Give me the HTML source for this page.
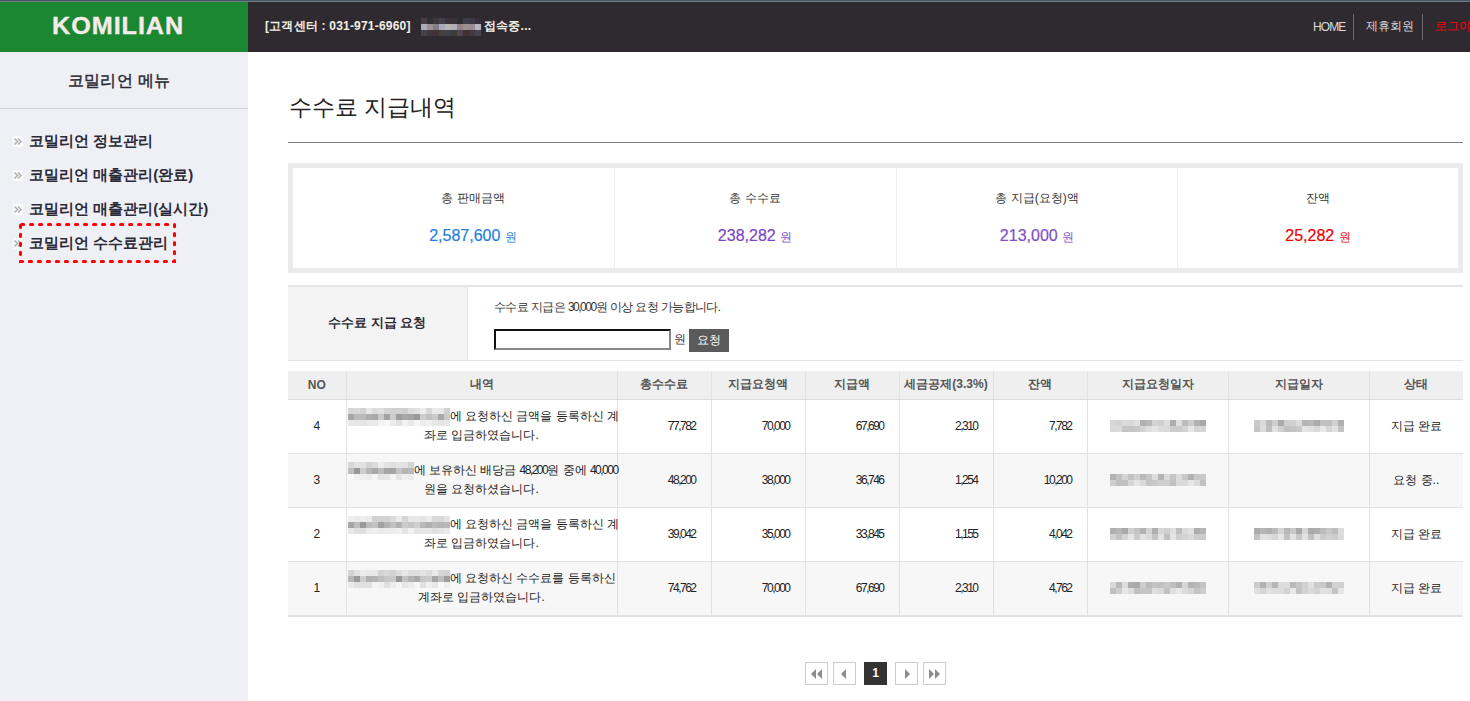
<!DOCTYPE html>
<html><head><meta charset="utf-8">
<style>
*{margin:0;padding:0;box-sizing:border-box}
html,body{width:1470px;height:701px;overflow:hidden;background:#fff;font-family:"Liberation Sans",sans-serif;color:#222}
.a{position:absolute}
#topline{left:0;top:0;width:1470px;height:2px;background:linear-gradient(#455760 0 1px,#707d85 1px 2px)}
#logo{left:0;top:2px;width:248px;height:50px;background:#1b8731}
#logo span{position:absolute;left:52px;top:11px;font-size:24px;font-weight:bold;letter-spacing:0.9px;color:#f6ebea;line-height:26px;transform:scaleX(1.05);transform-origin:0 0;-webkit-text-stroke:0.35px #f6ebea}
#hdr{left:248px;top:2px;width:1222px;height:50px;background:#2f2a30}
.ht{font-size:12px;font-weight:bold;color:#f0efe6;white-space:nowrap;line-height:14px;letter-spacing:0.2px}
.nav{font-size:12px;color:#dcdcdc;white-space:nowrap;line-height:14px}
.sep{width:1px;height:26px;top:14px;background:#6b666b}
#side{left:0;top:52px;width:248px;height:649px;background:#eff0f5}
#sidetitle{left:0;top:72px;width:238px;text-align:center;font-size:16px;font-weight:normal;-webkit-text-stroke:0.45px;letter-spacing:0.3px;color:#2a2a33;line-height:18px;white-space:nowrap}
#sideline{left:0;top:108px;width:248px;height:1px;background:#d2d3d8}
.mi{left:29px;font-size:15px;font-weight:bold;color:#2b2b38;white-space:nowrap;line-height:17px}
.bul{left:13px;width:10px;height:11px;background:#fafafa}
#title{left:289px;top:94px;font-size:23px;color:#222;white-space:nowrap;line-height:26px}
#titleline{left:288px;top:142px;width:1175px;height:1px;background:#7d7d7d}
#sum{left:288px;top:163px;width:1175px;height:110px;border:5px solid #ebebeb;background:#fff}
.vd{width:1px;background:#eeeeee}
.sl{font-size:12px;color:#333;white-space:nowrap;line-height:14px;text-align:center}
.sv{font-size:16px;white-space:nowrap;line-height:18px;text-align:center;-webkit-text-stroke:0.2px}
.sv small{font-size:12px;-webkit-text-stroke:0}
#req{left:288px;top:285px;width:1175px;height:76px;border-top:2px solid #e6e6e6;border-bottom:1px solid #e3e3e3}
#reqth{left:288px;top:287px;width:180px;height:73px;background:#f3f3f3;border-right:1px solid #e4e4e4}
table{border-collapse:collapse;table-layout:fixed}
#tbl{left:288px;top:371px;width:1175px}
#tbl th{height:28px;background:#efefef;font-size:12px;font-weight:bold;color:#555;border-left:1px solid #e2e2e2;border-bottom:1px solid #dcdcdc;white-space:nowrap}
#tbl td{height:54px;font-size:12px;color:#222;border-left:1px solid #e2e2e2;border-bottom:1px solid #e0e0e0;text-align:center;white-space:nowrap}
#tbl th:first-child,#tbl td:first-child{border-left:none}
#tbl tr.g td{background:#f7f7f7}
#tbl td.n{text-align:right;padding-right:15px;letter-spacing:-1.5px}
.nn{letter-spacing:-1.5px}
#tbl tr:last-child td{border-bottom:2px solid #e0e0e0;height:55px}
#tbl td.d{text-align:center;padding:0 1px 0 1px;vertical-align:top}
#tbl td.d .l1{display:flex;align-items:center;height:18px;margin-top:8px;white-space:nowrap}
#tbl td.d .l1 svg{flex:none}
#tbl td.d .l2{height:19px;line-height:19px;text-align:center}
.tri{width:0;height:0;border-top:5px solid transparent;border-bottom:5px solid transparent}
.tl{border-right:5px solid #8c8c8c}
.tr{border-left:5px solid #8c8c8c}
.pg{width:23px;height:23px;border:1px solid #cccccc;background:#fff;top:662px}
</style></head><body>
<div id="topline" class="a"></div>
<div id="logo" class="a"><span>KOMILIAN</span></div>
<div id="hdr" class="a"></div>
<div class="a ht" style="left:265px;top:19px">[고객센터 : 031-971-6960]</div>
<div class="a" style="left:421px;top:18px"><svg width="60" height="18" style="display:block" shape-rendering="crispEdges"><rect x="0" y="0" width="6" height="6" fill="#463b3f"/><rect x="6" y="0" width="6" height="6" fill="#2f2f34"/><rect x="12" y="0" width="6" height="6" fill="#3a383d"/><rect x="18" y="0" width="6" height="6" fill="#3f3e49"/><rect x="24" y="0" width="6" height="6" fill="#3e303b"/><rect x="30" y="0" width="6" height="6" fill="#383336"/><rect x="36" y="0" width="6" height="6" fill="#2f2b33"/><rect x="42" y="0" width="6" height="6" fill="#3d3b47"/><rect x="48" y="0" width="6" height="6" fill="#3b3846"/><rect x="54" y="0" width="6" height="6" fill="#352e39"/><rect x="0" y="6" width="6" height="6" fill="#adabb7"/><rect x="6" y="6" width="6" height="6" fill="#9c9094"/><rect x="12" y="6" width="6" height="6" fill="#837d88"/><rect x="18" y="6" width="6" height="6" fill="#aaa9b7"/><rect x="24" y="6" width="6" height="6" fill="#b9b5b5"/><rect x="30" y="6" width="6" height="6" fill="#b1aeb7"/><rect x="36" y="6" width="6" height="6" fill="#938184"/><rect x="42" y="6" width="6" height="6" fill="#9b9191"/><rect x="48" y="6" width="6" height="6" fill="#9a8997"/><rect x="54" y="6" width="6" height="6" fill="#b7b5be"/><rect x="0" y="12" width="6" height="6" fill="#474147"/><rect x="6" y="12" width="6" height="6" fill="#3c3640"/><rect x="12" y="12" width="6" height="6" fill="#433133"/><rect x="18" y="12" width="6" height="6" fill="#424141"/><rect x="24" y="12" width="6" height="6" fill="#433f4a"/><rect x="30" y="12" width="6" height="6" fill="#3d3c3d"/><rect x="36" y="12" width="6" height="6" fill="#514553"/><rect x="42" y="12" width="6" height="6" fill="#403030"/><rect x="48" y="12" width="6" height="6" fill="#473740"/><rect x="54" y="12" width="6" height="6" fill="#464451"/></svg></div>
<div class="a ht" style="left:484px;top:19px">접속중...</div>
<div class="a nav" style="left:1313px;top:20px;letter-spacing:-0.9px">HOME</div>
<div class="a sep" style="left:1353px"></div>
<div class="a nav" style="left:1366px;top:19px">제휴회원</div>
<div class="a sep" style="left:1422px"></div>
<div class="a nav" style="left:1435px;top:19px;color:#ff0000">로그아웃</div>

<div id="side" class="a"></div>
<div id="sidetitle" class="a">코밀리언 메뉴</div>
<div id="sideline" class="a"></div>
<div class="a bul" style="top:136px"><svg width="10" height="11" style="display:block"><path d="M1.5 2.5 L4.5 5.5 L1.5 8.5 M5 2.5 L8 5.5 L5 8.5" fill="none" stroke="#b4b4b4" stroke-width="1.7"/></svg></div>
<div class="a mi" style="top:132px">코밀리언 정보관리</div>
<div class="a bul" style="top:170px"><svg width="10" height="11" style="display:block"><path d="M1.5 2.5 L4.5 5.5 L1.5 8.5 M5 2.5 L8 5.5 L5 8.5" fill="none" stroke="#b4b4b4" stroke-width="1.7"/></svg></div>
<div class="a mi" style="top:166px">코밀리언 매출관리(완료)</div>
<div class="a bul" style="top:204px"><svg width="10" height="11" style="display:block"><path d="M1.5 2.5 L4.5 5.5 L1.5 8.5 M5 2.5 L8 5.5 L5 8.5" fill="none" stroke="#b4b4b4" stroke-width="1.7"/></svg></div>
<div class="a mi" style="top:200px">코밀리언 매출관리(실시간)</div>
<div class="a bul" style="top:238px"><svg width="10" height="11" style="display:block"><path d="M1.5 2.5 L4.5 5.5 L1.5 8.5 M5 2.5 L8 5.5 L5 8.5" fill="none" stroke="#b4b4b4" stroke-width="1.7"/></svg></div>
<div class="a mi" style="top:234px">코밀리언 수수료관리</div>
<svg class="a" style="left:19px;top:223px" width="157" height="40"><rect x="1.5" y="1.5" width="154" height="37" fill="none" stroke="#ff0000" stroke-width="3" stroke-dasharray="2.2 6.8" stroke-linecap="round" stroke-dashoffset="-1"/></svg>

<div id="title" class="a">수수료 지급내역</div>
<div id="titleline" class="a"></div>

<div id="sum" class="a"></div>
<div class="a vd" style="left:614px;top:168px;height:100px"></div>
<div class="a vd" style="left:896px;top:168px;height:100px"></div>
<div class="a vd" style="left:1177px;top:168px;height:100px"></div>
<div class="a sl" style="left:373px;top:191px;width:200px">총 판매금액</div>
<div class="a sv" style="left:373px;top:227px;width:200px;color:#1f7fdc">2,587,600 <small>원</small></div>
<div class="a sl" style="left:655px;top:191px;width:200px">총 수수료</div>
<div class="a sv" style="left:655px;top:227px;width:200px;color:#7d45c8">238,282 <small>원</small></div>
<div class="a sl" style="left:937px;top:191px;width:200px">총 지급(요청)액</div>
<div class="a sv" style="left:937px;top:227px;width:200px;color:#7d4fc8">213,000 <small>원</small></div>
<div class="a sl" style="left:1218px;top:191px;width:200px">잔액</div>
<div class="a sv" style="left:1218px;top:227px;width:200px;color:#ee0000">25,282 <small>원</small></div>

<div id="req" class="a"></div>
<div id="reqth" class="a"></div>
<div class="a" style="left:328px;top:315px;font-size:13px;font-weight:bold;color:#2a2a33;white-space:nowrap;line-height:15px">수수료 지급 요청</div>
<div class="a" style="left:494px;top:300px;font-size:12px;color:#333;white-space:nowrap;line-height:14px;letter-spacing:-0.6px">수수료 지급은 <span class="nn">30,000</span>원 이상 요청 가능합니다.</div>
<div class="a" style="left:494px;top:329px;width:177px;height:21px;border:2px solid;border-color:#111 #888 #888 #111;background:#fff"></div>
<div class="a" style="left:674px;top:332px;font-size:12px;color:#333;line-height:14px">원</div>
<div class="a" style="left:689px;top:329px;width:40px;height:23px;background:#5a5a5a;color:#fff;font-size:12px;line-height:23px;text-align:center">요청</div>

<table id="tbl" class="a">
<colgroup><col style="width:58px"><col style="width:271px"><col style="width:94px"><col style="width:94px"><col style="width:94px"><col style="width:94px"><col style="width:94px"><col style="width:141px"><col style="width:141px"><col style="width:94px"></colgroup>
<tr><th>NO</th><th>내역</th><th>총수수료</th><th>지급요청액</th><th>지급액</th><th>세금공제(3.3%)</th><th>잔액</th><th>지급요청일자</th><th>지급일자</th><th>상태</th></tr>
<tr><td>4</td><td class="d"><div class="l1"><svg width="102" height="18" style="display:block" shape-rendering="crispEdges"><rect x="0" y="0" width="6" height="6" fill="#d7d7d7"/><rect x="6" y="0" width="6" height="6" fill="#d9d9d9"/><rect x="12" y="0" width="6" height="6" fill="#d3d3d3"/><rect x="18" y="0" width="6" height="6" fill="#e7e7e7"/><rect x="24" y="0" width="6" height="6" fill="#dcdcdc"/><rect x="30" y="0" width="6" height="6" fill="#dfdfdf"/><rect x="36" y="0" width="6" height="6" fill="#d4d4d4"/><rect x="42" y="0" width="6" height="6" fill="#d2d2d2"/><rect x="48" y="0" width="6" height="6" fill="#d2d2d2"/><rect x="54" y="0" width="6" height="6" fill="#d0d0d0"/><rect x="60" y="0" width="6" height="6" fill="#dcdcdc"/><rect x="66" y="0" width="6" height="6" fill="#e1e1e1"/><rect x="72" y="0" width="6" height="6" fill="#ededed"/><rect x="78" y="0" width="6" height="6" fill="#d9d9d9"/><rect x="84" y="0" width="6" height="6" fill="#e9e9e9"/><rect x="90" y="0" width="6" height="6" fill="#e8e8e8"/><rect x="96" y="0" width="6" height="6" fill="#d1d1d1"/><rect x="0" y="6" width="6" height="6" fill="#a6a6a6"/><rect x="6" y="6" width="6" height="6" fill="#b9b9b9"/><rect x="12" y="6" width="6" height="6" fill="#bababa"/><rect x="18" y="6" width="6" height="6" fill="#afafaf"/><rect x="24" y="6" width="6" height="6" fill="#a9a9a9"/><rect x="30" y="6" width="6" height="6" fill="#c9c9c9"/><rect x="36" y="6" width="6" height="6" fill="#a3a3a3"/><rect x="42" y="6" width="6" height="6" fill="#cccccc"/><rect x="48" y="6" width="6" height="6" fill="#9e9e9e"/><rect x="54" y="6" width="6" height="6" fill="#a8a8a8"/><rect x="60" y="6" width="6" height="6" fill="#a5a5a5"/><rect x="66" y="6" width="6" height="6" fill="#999999"/><rect x="72" y="6" width="6" height="6" fill="#cdcdcd"/><rect x="78" y="6" width="6" height="6" fill="#c1c1c1"/><rect x="84" y="6" width="6" height="6" fill="#cbcbcb"/><rect x="90" y="6" width="6" height="6" fill="#a8a8a8"/><rect x="96" y="6" width="6" height="6" fill="#cbcbcb"/><rect x="0" y="12" width="6" height="6" fill="#e8e8e8"/><rect x="6" y="12" width="6" height="6" fill="#e6e6e6"/><rect x="12" y="12" width="6" height="6" fill="#e5e5e5"/><rect x="18" y="12" width="6" height="6" fill="#e9e9e9"/><rect x="24" y="12" width="6" height="6" fill="#e9e9e9"/><rect x="30" y="12" width="6" height="6" fill="#f4f4f4"/><rect x="36" y="12" width="6" height="6" fill="#f7f7f7"/><rect x="42" y="12" width="6" height="6" fill="#ebebeb"/><rect x="48" y="12" width="6" height="6" fill="#e2e2e2"/><rect x="54" y="12" width="6" height="6" fill="#f3f3f3"/><rect x="60" y="12" width="6" height="6" fill="#eaeaea"/><rect x="66" y="12" width="6" height="6" fill="#f5f5f5"/><rect x="72" y="12" width="6" height="6" fill="#ececec"/><rect x="78" y="12" width="6" height="6" fill="#f0f0f0"/><rect x="84" y="12" width="6" height="6" fill="#e7e7e7"/><rect x="90" y="12" width="6" height="6" fill="#e5e5e5"/><rect x="96" y="12" width="6" height="6" fill="#e7e7e7"/></svg><span>에 요청하신 금액을 등록하신 계</span></div><div class="l2">좌로 입금하였습니다.</div></td><td class="n">77,782</td><td class="n">70,000</td><td class="n">67,690</td><td class="n">2,310</td><td class="n">7,782</td><td></td><td></td><td>지급 완료</td></tr>
<tr class="g"><td>3</td><td class="d"><div class="l1"><svg width="66" height="18" style="display:block" shape-rendering="crispEdges"><rect x="0" y="0" width="6" height="6" fill="#d7d7d7"/><rect x="6" y="0" width="6" height="6" fill="#e2e2e2"/><rect x="12" y="0" width="6" height="6" fill="#e1e1e1"/><rect x="18" y="0" width="6" height="6" fill="#d4d4d4"/><rect x="24" y="0" width="6" height="6" fill="#dbdbdb"/><rect x="30" y="0" width="6" height="6" fill="#ededed"/><rect x="36" y="0" width="6" height="6" fill="#e3e3e3"/><rect x="42" y="0" width="6" height="6" fill="#dfdfdf"/><rect x="48" y="0" width="6" height="6" fill="#e4e4e4"/><rect x="54" y="0" width="6" height="6" fill="#e2e2e2"/><rect x="60" y="0" width="6" height="6" fill="#d2d2d2"/><rect x="0" y="6" width="6" height="6" fill="#bebebe"/><rect x="6" y="6" width="6" height="6" fill="#989898"/><rect x="12" y="6" width="6" height="6" fill="#cdcdcd"/><rect x="18" y="6" width="6" height="6" fill="#b6b6b6"/><rect x="24" y="6" width="6" height="6" fill="#a8a8a8"/><rect x="30" y="6" width="6" height="6" fill="#bbbbbb"/><rect x="36" y="6" width="6" height="6" fill="#a6a6a6"/><rect x="42" y="6" width="6" height="6" fill="#a4a4a4"/><rect x="48" y="6" width="6" height="6" fill="#c5c5c5"/><rect x="54" y="6" width="6" height="6" fill="#b6b6b6"/><rect x="60" y="6" width="6" height="6" fill="#bababa"/><rect x="0" y="12" width="6" height="6" fill="#fafafa"/><rect x="6" y="12" width="6" height="6" fill="#f1f1f1"/><rect x="12" y="12" width="6" height="6" fill="#efefef"/><rect x="18" y="12" width="6" height="6" fill="#ececec"/><rect x="24" y="12" width="6" height="6" fill="#f4f4f4"/><rect x="30" y="12" width="6" height="6" fill="#e4e4e4"/><rect x="36" y="12" width="6" height="6" fill="#e7e7e7"/><rect x="42" y="12" width="6" height="6" fill="#f4f4f4"/><rect x="48" y="12" width="6" height="6" fill="#e4e4e4"/><rect x="54" y="12" width="6" height="6" fill="#f0f0f0"/><rect x="60" y="12" width="6" height="6" fill="#ececec"/></svg><span>에 보유하신 배당금 <span class="nn">48,200</span>원 중에 <span class="nn">40,000</span></span></div><div class="l2">원을 요청하셨습니다.</div></td><td class="n">48,200</td><td class="n">38,000</td><td class="n">36,746</td><td class="n">1,254</td><td class="n">10,200</td><td></td><td></td><td>요청 중..</td></tr>
<tr><td>2</td><td class="d"><div class="l1"><svg width="102" height="18" style="display:block" shape-rendering="crispEdges"><rect x="0" y="0" width="6" height="6" fill="#eeeeee"/><rect x="6" y="0" width="6" height="6" fill="#ebebeb"/><rect x="12" y="0" width="6" height="6" fill="#eeeeee"/><rect x="18" y="0" width="6" height="6" fill="#ebebeb"/><rect x="24" y="0" width="6" height="6" fill="#d1d1d1"/><rect x="30" y="0" width="6" height="6" fill="#d2d2d2"/><rect x="36" y="0" width="6" height="6" fill="#d2d2d2"/><rect x="42" y="0" width="6" height="6" fill="#dbdbdb"/><rect x="48" y="0" width="6" height="6" fill="#eaeaea"/><rect x="54" y="0" width="6" height="6" fill="#d5d5d5"/><rect x="60" y="0" width="6" height="6" fill="#e7e7e7"/><rect x="66" y="0" width="6" height="6" fill="#e9e9e9"/><rect x="72" y="0" width="6" height="6" fill="#e5e5e5"/><rect x="78" y="0" width="6" height="6" fill="#ebebeb"/><rect x="84" y="0" width="6" height="6" fill="#d9d9d9"/><rect x="90" y="0" width="6" height="6" fill="#d8d8d8"/><rect x="96" y="0" width="6" height="6" fill="#e3e3e3"/><rect x="0" y="6" width="6" height="6" fill="#a5a5a5"/><rect x="6" y="6" width="6" height="6" fill="#bebebe"/><rect x="12" y="6" width="6" height="6" fill="#9a9a9a"/><rect x="18" y="6" width="6" height="6" fill="#bdbdbd"/><rect x="24" y="6" width="6" height="6" fill="#c3c3c3"/><rect x="30" y="6" width="6" height="6" fill="#a2a2a2"/><rect x="36" y="6" width="6" height="6" fill="#b3b3b3"/><rect x="42" y="6" width="6" height="6" fill="#c0c0c0"/><rect x="48" y="6" width="6" height="6" fill="#b1b1b1"/><rect x="54" y="6" width="6" height="6" fill="#cbcbcb"/><rect x="60" y="6" width="6" height="6" fill="#c6c6c6"/><rect x="66" y="6" width="6" height="6" fill="#cfcfcf"/><rect x="72" y="6" width="6" height="6" fill="#b8b8b8"/><rect x="78" y="6" width="6" height="6" fill="#afafaf"/><rect x="84" y="6" width="6" height="6" fill="#bababa"/><rect x="90" y="6" width="6" height="6" fill="#b4b4b4"/><rect x="96" y="6" width="6" height="6" fill="#b8b8b8"/><rect x="0" y="12" width="6" height="6" fill="#e8e8e8"/><rect x="6" y="12" width="6" height="6" fill="#e1e1e1"/><rect x="12" y="12" width="6" height="6" fill="#e0e0e0"/><rect x="18" y="12" width="6" height="6" fill="#ebebeb"/><rect x="24" y="12" width="6" height="6" fill="#eeeeee"/><rect x="30" y="12" width="6" height="6" fill="#eaeaea"/><rect x="36" y="12" width="6" height="6" fill="#ececec"/><rect x="42" y="12" width="6" height="6" fill="#ededed"/><rect x="48" y="12" width="6" height="6" fill="#f0f0f0"/><rect x="54" y="12" width="6" height="6" fill="#e5e5e5"/><rect x="60" y="12" width="6" height="6" fill="#f1f1f1"/><rect x="66" y="12" width="6" height="6" fill="#e5e5e5"/><rect x="72" y="12" width="6" height="6" fill="#e7e7e7"/><rect x="78" y="12" width="6" height="6" fill="#e7e7e7"/><rect x="84" y="12" width="6" height="6" fill="#e0e0e0"/><rect x="90" y="12" width="6" height="6" fill="#e5e5e5"/><rect x="96" y="12" width="6" height="6" fill="#eaeaea"/></svg><span>에 요청하신 금액을 등록하신 계</span></div><div class="l2">좌로 입금하였습니다.</div></td><td class="n">39,042</td><td class="n">35,000</td><td class="n">33,845</td><td class="n">1,155</td><td class="n">4,042</td><td></td><td></td><td>지급 완료</td></tr>
<tr class="g"><td>1</td><td class="d"><div class="l1"><svg width="102" height="18" style="display:block" shape-rendering="crispEdges"><rect x="0" y="0" width="6" height="6" fill="#d4d4d4"/><rect x="6" y="0" width="6" height="6" fill="#e2e2e2"/><rect x="12" y="0" width="6" height="6" fill="#ebebeb"/><rect x="18" y="0" width="6" height="6" fill="#e9e9e9"/><rect x="24" y="0" width="6" height="6" fill="#e8e8e8"/><rect x="30" y="0" width="6" height="6" fill="#d2d2d2"/><rect x="36" y="0" width="6" height="6" fill="#d8d8d8"/><rect x="42" y="0" width="6" height="6" fill="#d3d3d3"/><rect x="48" y="0" width="6" height="6" fill="#dfdfdf"/><rect x="54" y="0" width="6" height="6" fill="#e8e8e8"/><rect x="60" y="0" width="6" height="6" fill="#dedede"/><rect x="66" y="0" width="6" height="6" fill="#dfdfdf"/><rect x="72" y="0" width="6" height="6" fill="#e4e4e4"/><rect x="78" y="0" width="6" height="6" fill="#dcdcdc"/><rect x="84" y="0" width="6" height="6" fill="#e9e9e9"/><rect x="90" y="0" width="6" height="6" fill="#d6d6d6"/><rect x="96" y="0" width="6" height="6" fill="#d3d3d3"/><rect x="0" y="6" width="6" height="6" fill="#b7b7b7"/><rect x="6" y="6" width="6" height="6" fill="#999999"/><rect x="12" y="6" width="6" height="6" fill="#cdcdcd"/><rect x="18" y="6" width="6" height="6" fill="#b0b0b0"/><rect x="24" y="6" width="6" height="6" fill="#b3b3b3"/><rect x="30" y="6" width="6" height="6" fill="#bebebe"/><rect x="36" y="6" width="6" height="6" fill="#c8c8c8"/><rect x="42" y="6" width="6" height="6" fill="#c9c9c9"/><rect x="48" y="6" width="6" height="6" fill="#989898"/><rect x="54" y="6" width="6" height="6" fill="#c4c4c4"/><rect x="60" y="6" width="6" height="6" fill="#b4b4b4"/><rect x="66" y="6" width="6" height="6" fill="#a9a9a9"/><rect x="72" y="6" width="6" height="6" fill="#c6c6c6"/><rect x="78" y="6" width="6" height="6" fill="#cbcbcb"/><rect x="84" y="6" width="6" height="6" fill="#a6a6a6"/><rect x="90" y="6" width="6" height="6" fill="#bdbdbd"/><rect x="96" y="6" width="6" height="6" fill="#9e9e9e"/><rect x="0" y="12" width="6" height="6" fill="#eaeaea"/><rect x="6" y="12" width="6" height="6" fill="#e0e0e0"/><rect x="12" y="12" width="6" height="6" fill="#e0e0e0"/><rect x="18" y="12" width="6" height="6" fill="#e0e0e0"/><rect x="24" y="12" width="6" height="6" fill="#f4f4f4"/><rect x="30" y="12" width="6" height="6" fill="#f1f1f1"/><rect x="36" y="12" width="6" height="6" fill="#e0e0e0"/><rect x="42" y="12" width="6" height="6" fill="#ececec"/><rect x="48" y="12" width="6" height="6" fill="#f5f5f5"/><rect x="54" y="12" width="6" height="6" fill="#e6e6e6"/><rect x="60" y="12" width="6" height="6" fill="#ededed"/><rect x="66" y="12" width="6" height="6" fill="#f7f7f7"/><rect x="72" y="12" width="6" height="6" fill="#e0e0e0"/><rect x="78" y="12" width="6" height="6" fill="#f0f0f0"/><rect x="84" y="12" width="6" height="6" fill="#e7e7e7"/><rect x="90" y="12" width="6" height="6" fill="#f8f8f8"/><rect x="96" y="12" width="6" height="6" fill="#eeeeee"/></svg><span>에 요청하신 수수료를 등록하신</span></div><div class="l2">계좌로 입금하였습니다.</div></td><td class="n">74,762</td><td class="n">70,000</td><td class="n">67,690</td><td class="n">2,310</td><td class="n">4,762</td><td></td><td></td><td>지급 완료</td></tr>
</table>

<div class="a" style="left:1110px;top:420px"><svg width="96" height="12" style="display:block" shape-rendering="crispEdges"><rect x="0" y="0" width="6" height="6" fill="#d6d6d6"/><rect x="6" y="0" width="6" height="6" fill="#d3d3d3"/><rect x="12" y="0" width="6" height="6" fill="#dadada"/><rect x="18" y="0" width="6" height="6" fill="#d9d9d9"/><rect x="24" y="0" width="6" height="6" fill="#e0e0e0"/><rect x="30" y="0" width="6" height="6" fill="#b1b1b1"/><rect x="36" y="0" width="6" height="6" fill="#b8b8b8"/><rect x="42" y="0" width="6" height="6" fill="#d3d3d3"/><rect x="48" y="0" width="6" height="6" fill="#d0d0d0"/><rect x="54" y="0" width="6" height="6" fill="#dedede"/><rect x="60" y="0" width="6" height="6" fill="#aeaeae"/><rect x="66" y="0" width="6" height="6" fill="#dfdfdf"/><rect x="72" y="0" width="6" height="6" fill="#bcbcbc"/><rect x="78" y="0" width="6" height="6" fill="#cccccc"/><rect x="84" y="0" width="6" height="6" fill="#b2b2b2"/><rect x="90" y="0" width="6" height="6" fill="#a9a9a9"/><rect x="0" y="6" width="6" height="6" fill="#dadada"/><rect x="6" y="6" width="6" height="6" fill="#dadada"/><rect x="12" y="6" width="6" height="6" fill="#c4c4c4"/><rect x="18" y="6" width="6" height="6" fill="#c6c6c6"/><rect x="24" y="6" width="6" height="6" fill="#c8c8c8"/><rect x="30" y="6" width="6" height="6" fill="#d4d4d4"/><rect x="36" y="6" width="6" height="6" fill="#dedede"/><rect x="42" y="6" width="6" height="6" fill="#e5e5e5"/><rect x="48" y="6" width="6" height="6" fill="#dcdcdc"/><rect x="54" y="6" width="6" height="6" fill="#dadada"/><rect x="60" y="6" width="6" height="6" fill="#cdcdcd"/><rect x="66" y="6" width="6" height="6" fill="#cccccc"/><rect x="72" y="6" width="6" height="6" fill="#d4d4d4"/><rect x="78" y="6" width="6" height="6" fill="#e8e8e8"/><rect x="84" y="6" width="6" height="6" fill="#d5d5d5"/><rect x="90" y="6" width="6" height="6" fill="#d5d5d5"/></svg></div>
<div class="a" style="left:1254px;top:420px"><svg width="90" height="12" style="display:block" shape-rendering="crispEdges"><rect x="0" y="0" width="6" height="6" fill="#cacaca"/><rect x="6" y="0" width="6" height="6" fill="#dbdbdb"/><rect x="12" y="0" width="6" height="6" fill="#bababa"/><rect x="18" y="0" width="6" height="6" fill="#cfcfcf"/><rect x="24" y="0" width="6" height="6" fill="#a9a9a9"/><rect x="30" y="0" width="6" height="6" fill="#cfcfcf"/><rect x="36" y="0" width="6" height="6" fill="#d1d1d1"/><rect x="42" y="0" width="6" height="6" fill="#dcdcdc"/><rect x="48" y="0" width="6" height="6" fill="#b5b5b5"/><rect x="54" y="0" width="6" height="6" fill="#b8b8b8"/><rect x="60" y="0" width="6" height="6" fill="#ababab"/><rect x="66" y="0" width="6" height="6" fill="#c1c1c1"/><rect x="72" y="0" width="6" height="6" fill="#c0c0c0"/><rect x="78" y="0" width="6" height="6" fill="#d1d1d1"/><rect x="84" y="0" width="6" height="6" fill="#b0b0b0"/><rect x="0" y="6" width="6" height="6" fill="#c5c5c5"/><rect x="6" y="6" width="6" height="6" fill="#dddddd"/><rect x="12" y="6" width="6" height="6" fill="#c0c0c0"/><rect x="18" y="6" width="6" height="6" fill="#e1e1e1"/><rect x="24" y="6" width="6" height="6" fill="#cfcfcf"/><rect x="30" y="6" width="6" height="6" fill="#c1c1c1"/><rect x="36" y="6" width="6" height="6" fill="#c4c4c4"/><rect x="42" y="6" width="6" height="6" fill="#cacaca"/><rect x="48" y="6" width="6" height="6" fill="#e6e6e6"/><rect x="54" y="6" width="6" height="6" fill="#e1e1e1"/><rect x="60" y="6" width="6" height="6" fill="#d9d9d9"/><rect x="66" y="6" width="6" height="6" fill="#e9e9e9"/><rect x="72" y="6" width="6" height="6" fill="#d6d6d6"/><rect x="78" y="6" width="6" height="6" fill="#e2e2e2"/><rect x="84" y="6" width="6" height="6" fill="#c4c4c4"/></svg></div>
<div class="a" style="left:1110px;top:474px"><svg width="96" height="12" style="display:block" shape-rendering="crispEdges"><rect x="0" y="0" width="6" height="6" fill="#b2b2b2"/><rect x="6" y="0" width="6" height="6" fill="#c2c2c2"/><rect x="12" y="0" width="6" height="6" fill="#d4d4d4"/><rect x="18" y="0" width="6" height="6" fill="#c2c2c2"/><rect x="24" y="0" width="6" height="6" fill="#d0d0d0"/><rect x="30" y="0" width="6" height="6" fill="#bababa"/><rect x="36" y="0" width="6" height="6" fill="#c6c6c6"/><rect x="42" y="0" width="6" height="6" fill="#dddddd"/><rect x="48" y="0" width="6" height="6" fill="#b5b5b5"/><rect x="54" y="0" width="6" height="6" fill="#dadada"/><rect x="60" y="0" width="6" height="6" fill="#c6c6c6"/><rect x="66" y="0" width="6" height="6" fill="#dbdbdb"/><rect x="72" y="0" width="6" height="6" fill="#c8c8c8"/><rect x="78" y="0" width="6" height="6" fill="#b3b3b3"/><rect x="84" y="0" width="6" height="6" fill="#c8c8c8"/><rect x="90" y="0" width="6" height="6" fill="#c9c9c9"/><rect x="0" y="6" width="6" height="6" fill="#cfcfcf"/><rect x="6" y="6" width="6" height="6" fill="#c0c0c0"/><rect x="12" y="6" width="6" height="6" fill="#c0c0c0"/><rect x="18" y="6" width="6" height="6" fill="#d7d7d7"/><rect x="24" y="6" width="6" height="6" fill="#e5e5e5"/><rect x="30" y="6" width="6" height="6" fill="#dbdbdb"/><rect x="36" y="6" width="6" height="6" fill="#c4c4c4"/><rect x="42" y="6" width="6" height="6" fill="#c9c9c9"/><rect x="48" y="6" width="6" height="6" fill="#cecece"/><rect x="54" y="6" width="6" height="6" fill="#cecece"/><rect x="60" y="6" width="6" height="6" fill="#c2c2c2"/><rect x="66" y="6" width="6" height="6" fill="#dbdbdb"/><rect x="72" y="6" width="6" height="6" fill="#dadada"/><rect x="78" y="6" width="6" height="6" fill="#e7e7e7"/><rect x="84" y="6" width="6" height="6" fill="#dcdcdc"/><rect x="90" y="6" width="6" height="6" fill="#c2c2c2"/></svg></div>
<div class="a" style="left:1110px;top:528px"><svg width="96" height="12" style="display:block" shape-rendering="crispEdges"><rect x="0" y="0" width="6" height="6" fill="#b0b0b0"/><rect x="6" y="0" width="6" height="6" fill="#b7b7b7"/><rect x="12" y="0" width="6" height="6" fill="#a9a9a9"/><rect x="18" y="0" width="6" height="6" fill="#cfcfcf"/><rect x="24" y="0" width="6" height="6" fill="#c4c4c4"/><rect x="30" y="0" width="6" height="6" fill="#b3b3b3"/><rect x="36" y="0" width="6" height="6" fill="#d4d4d4"/><rect x="42" y="0" width="6" height="6" fill="#afafaf"/><rect x="48" y="0" width="6" height="6" fill="#d7d7d7"/><rect x="54" y="0" width="6" height="6" fill="#d1d1d1"/><rect x="60" y="0" width="6" height="6" fill="#e0e0e0"/><rect x="66" y="0" width="6" height="6" fill="#bebebe"/><rect x="72" y="0" width="6" height="6" fill="#dadada"/><rect x="78" y="0" width="6" height="6" fill="#e0e0e0"/><rect x="84" y="0" width="6" height="6" fill="#adadad"/><rect x="90" y="0" width="6" height="6" fill="#b6b6b6"/><rect x="0" y="6" width="6" height="6" fill="#d1d1d1"/><rect x="6" y="6" width="6" height="6" fill="#c3c3c3"/><rect x="12" y="6" width="6" height="6" fill="#d4d4d4"/><rect x="18" y="6" width="6" height="6" fill="#e6e6e6"/><rect x="24" y="6" width="6" height="6" fill="#cbcbcb"/><rect x="30" y="6" width="6" height="6" fill="#e3e3e3"/><rect x="36" y="6" width="6" height="6" fill="#dbdbdb"/><rect x="42" y="6" width="6" height="6" fill="#c3c3c3"/><rect x="48" y="6" width="6" height="6" fill="#e4e4e4"/><rect x="54" y="6" width="6" height="6" fill="#c1c1c1"/><rect x="60" y="6" width="6" height="6" fill="#e5e5e5"/><rect x="66" y="6" width="6" height="6" fill="#d0d0d0"/><rect x="72" y="6" width="6" height="6" fill="#d3d3d3"/><rect x="78" y="6" width="6" height="6" fill="#dadada"/><rect x="84" y="6" width="6" height="6" fill="#cccccc"/><rect x="90" y="6" width="6" height="6" fill="#cbcbcb"/></svg></div>
<div class="a" style="left:1254px;top:528px"><svg width="90" height="12" style="display:block" shape-rendering="crispEdges"><rect x="0" y="0" width="6" height="6" fill="#acacac"/><rect x="6" y="0" width="6" height="6" fill="#b5b5b5"/><rect x="12" y="0" width="6" height="6" fill="#b1b1b1"/><rect x="18" y="0" width="6" height="6" fill="#bbbbbb"/><rect x="24" y="0" width="6" height="6" fill="#d4d4d4"/><rect x="30" y="0" width="6" height="6" fill="#b7b7b7"/><rect x="36" y="0" width="6" height="6" fill="#c7c7c7"/><rect x="42" y="0" width="6" height="6" fill="#a9a9a9"/><rect x="48" y="0" width="6" height="6" fill="#d6d6d6"/><rect x="54" y="0" width="6" height="6" fill="#aaaaaa"/><rect x="60" y="0" width="6" height="6" fill="#aeaeae"/><rect x="66" y="0" width="6" height="6" fill="#bcbcbc"/><rect x="72" y="0" width="6" height="6" fill="#c8c8c8"/><rect x="78" y="0" width="6" height="6" fill="#bdbdbd"/><rect x="84" y="0" width="6" height="6" fill="#dddddd"/><rect x="0" y="6" width="6" height="6" fill="#c3c3c3"/><rect x="6" y="6" width="6" height="6" fill="#e1e1e1"/><rect x="12" y="6" width="6" height="6" fill="#dedede"/><rect x="18" y="6" width="6" height="6" fill="#d7d7d7"/><rect x="24" y="6" width="6" height="6" fill="#e6e6e6"/><rect x="30" y="6" width="6" height="6" fill="#c0c0c0"/><rect x="36" y="6" width="6" height="6" fill="#e2e2e2"/><rect x="42" y="6" width="6" height="6" fill="#c8c8c8"/><rect x="48" y="6" width="6" height="6" fill="#e1e1e1"/><rect x="54" y="6" width="6" height="6" fill="#c0c0c0"/><rect x="60" y="6" width="6" height="6" fill="#dfdfdf"/><rect x="66" y="6" width="6" height="6" fill="#cccccc"/><rect x="72" y="6" width="6" height="6" fill="#d2d2d2"/><rect x="78" y="6" width="6" height="6" fill="#cccccc"/><rect x="84" y="6" width="6" height="6" fill="#dcdcdc"/></svg></div>
<div class="a" style="left:1110px;top:582px"><svg width="96" height="12" style="display:block" shape-rendering="crispEdges"><rect x="0" y="0" width="6" height="6" fill="#d9d9d9"/><rect x="6" y="0" width="6" height="6" fill="#bababa"/><rect x="12" y="0" width="6" height="6" fill="#dddddd"/><rect x="18" y="0" width="6" height="6" fill="#adadad"/><rect x="24" y="0" width="6" height="6" fill="#a9a9a9"/><rect x="30" y="0" width="6" height="6" fill="#cdcdcd"/><rect x="36" y="0" width="6" height="6" fill="#bbbbbb"/><rect x="42" y="0" width="6" height="6" fill="#c3c3c3"/><rect x="48" y="0" width="6" height="6" fill="#c0c0c0"/><rect x="54" y="0" width="6" height="6" fill="#c9c9c9"/><rect x="60" y="0" width="6" height="6" fill="#bebebe"/><rect x="66" y="0" width="6" height="6" fill="#b0b0b0"/><rect x="72" y="0" width="6" height="6" fill="#d6d6d6"/><rect x="78" y="0" width="6" height="6" fill="#b4b4b4"/><rect x="84" y="0" width="6" height="6" fill="#b9b9b9"/><rect x="90" y="0" width="6" height="6" fill="#c4c4c4"/><rect x="0" y="6" width="6" height="6" fill="#c0c0c0"/><rect x="6" y="6" width="6" height="6" fill="#cecece"/><rect x="12" y="6" width="6" height="6" fill="#e7e7e7"/><rect x="18" y="6" width="6" height="6" fill="#dddddd"/><rect x="24" y="6" width="6" height="6" fill="#c1c1c1"/><rect x="30" y="6" width="6" height="6" fill="#c6c6c6"/><rect x="36" y="6" width="6" height="6" fill="#c5c5c5"/><rect x="42" y="6" width="6" height="6" fill="#dfdfdf"/><rect x="48" y="6" width="6" height="6" fill="#dadada"/><rect x="54" y="6" width="6" height="6" fill="#c1c1c1"/><rect x="60" y="6" width="6" height="6" fill="#e0e0e0"/><rect x="66" y="6" width="6" height="6" fill="#e8e8e8"/><rect x="72" y="6" width="6" height="6" fill="#dbdbdb"/><rect x="78" y="6" width="6" height="6" fill="#d6d6d6"/><rect x="84" y="6" width="6" height="6" fill="#c3c3c3"/><rect x="90" y="6" width="6" height="6" fill="#cdcdcd"/></svg></div>
<div class="a" style="left:1254px;top:582px"><svg width="90" height="12" style="display:block" shape-rendering="crispEdges"><rect x="0" y="0" width="6" height="6" fill="#cccccc"/><rect x="6" y="0" width="6" height="6" fill="#b2b2b2"/><rect x="12" y="0" width="6" height="6" fill="#d0d0d0"/><rect x="18" y="0" width="6" height="6" fill="#b6b6b6"/><rect x="24" y="0" width="6" height="6" fill="#dcdcdc"/><rect x="30" y="0" width="6" height="6" fill="#dddddd"/><rect x="36" y="0" width="6" height="6" fill="#b9b9b9"/><rect x="42" y="0" width="6" height="6" fill="#c6c6c6"/><rect x="48" y="0" width="6" height="6" fill="#d1d1d1"/><rect x="54" y="0" width="6" height="6" fill="#e0e0e0"/><rect x="60" y="0" width="6" height="6" fill="#cacaca"/><rect x="66" y="0" width="6" height="6" fill="#c9c9c9"/><rect x="72" y="0" width="6" height="6" fill="#b3b3b3"/><rect x="78" y="0" width="6" height="6" fill="#d1d1d1"/><rect x="84" y="0" width="6" height="6" fill="#cfcfcf"/><rect x="0" y="6" width="6" height="6" fill="#e0e0e0"/><rect x="6" y="6" width="6" height="6" fill="#d4d4d4"/><rect x="12" y="6" width="6" height="6" fill="#e1e1e1"/><rect x="18" y="6" width="6" height="6" fill="#dedede"/><rect x="24" y="6" width="6" height="6" fill="#dcdcdc"/><rect x="30" y="6" width="6" height="6" fill="#d2d2d2"/><rect x="36" y="6" width="6" height="6" fill="#e8e8e8"/><rect x="42" y="6" width="6" height="6" fill="#c4c4c4"/><rect x="48" y="6" width="6" height="6" fill="#d3d3d3"/><rect x="54" y="6" width="6" height="6" fill="#dadada"/><rect x="60" y="6" width="6" height="6" fill="#d3d3d3"/><rect x="66" y="6" width="6" height="6" fill="#e1e1e1"/><rect x="72" y="6" width="6" height="6" fill="#dfdfdf"/><rect x="78" y="6" width="6" height="6" fill="#c3c3c3"/><rect x="84" y="6" width="6" height="6" fill="#e6e6e6"/></svg></div>
<div class="a pg" style="left:805px"></div>
<div class="a pg" style="left:833px"></div>
<div class="a pg" style="left:864px;background:#333;border-color:#333;color:#fff;font-size:12px;font-weight:bold;text-align:center;line-height:21px">1</div>
<div class="a pg" style="left:895px"></div>
<div class="a pg" style="left:923px"></div>
<div class="a tri tl" style="left:811px;top:669px"></div><div class="a tri tl" style="left:817px;top:669px"></div>
<div class="a tri tl" style="left:841px;top:669px"></div>
<div class="a tri tr" style="left:905px;top:669px"></div>
<div class="a tri tr" style="left:929px;top:669px"></div><div class="a tri tr" style="left:935px;top:669px"></div>
</body></html>
